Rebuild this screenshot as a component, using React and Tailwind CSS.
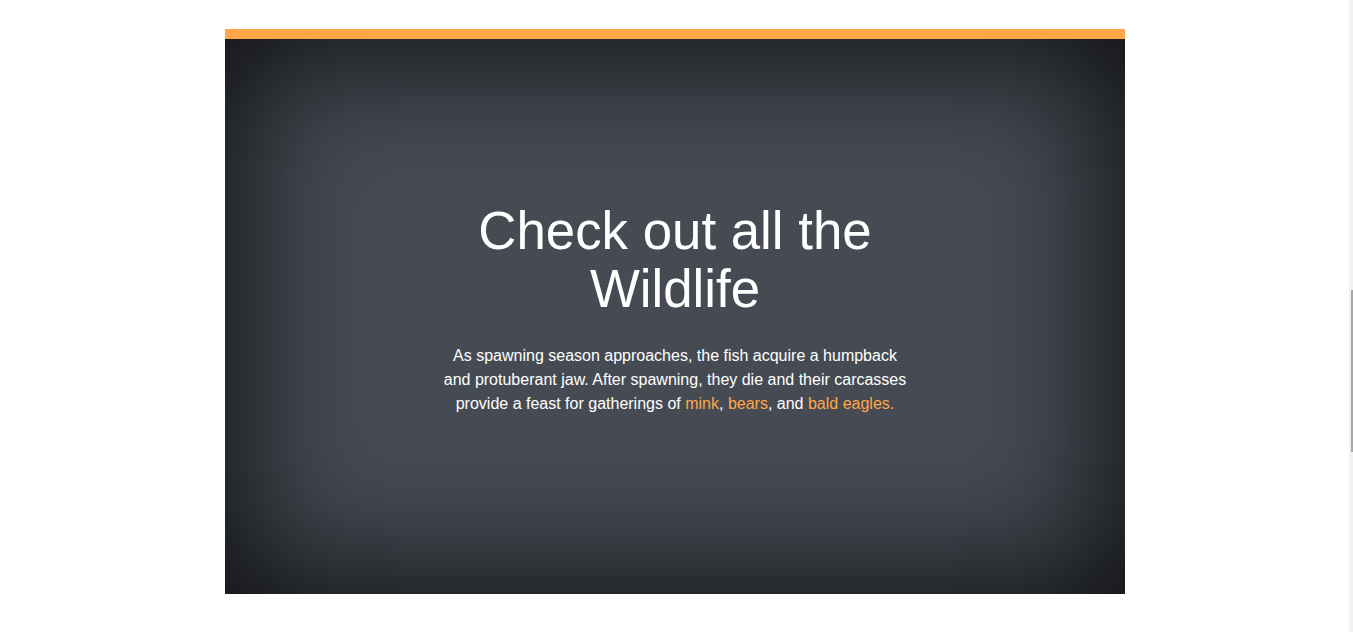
export default function App() {
  return (
    <div className="min-h-screen bg-white pt-[29px] pb-[38px] pr-[3px] font-['Liberation_Sans',Arial,sans-serif]">
      <section className="mx-auto w-[900px] border-t-[10px] border-[#ffa646]">
        <div className="h-[555px] bg-[#464b53] shadow-[inset_0_0_130px_18px_rgba(0,0,0,0.78)] flex flex-col items-center justify-center pb-4 text-white text-center">
          <h1 className="text-[52.8px] leading-[58px] font-normal w-[420px]">
            Check out all the Wildlife
          </h1>
          <p className="mt-[26px] w-[470px] text-[16px] leading-[24px]">
            As spawning season approaches, the fish acquire a humpback and protuberant jaw. After spawning, they die and their carcasses provide a feast for gatherings of{' '}
            <a href="#" className="text-[#ffa646]">mink</a>,{' '}
            <a href="#" className="text-[#ffa646]">bears</a>, and{' '}
            <a href="#" className="text-[#ffa646]">bald eagles.</a>
          </p>
        </div>
      </section>

      {/* thin overlay scrollbar */}
      <div className="fixed right-0 top-0 h-full w-[4px] bg-[#f1f1f1]">
        <div className="absolute right-0 top-[290px] h-[162px] w-[2px] bg-[#a8a8a8]" />
      </div>
    </div>
  );
}
